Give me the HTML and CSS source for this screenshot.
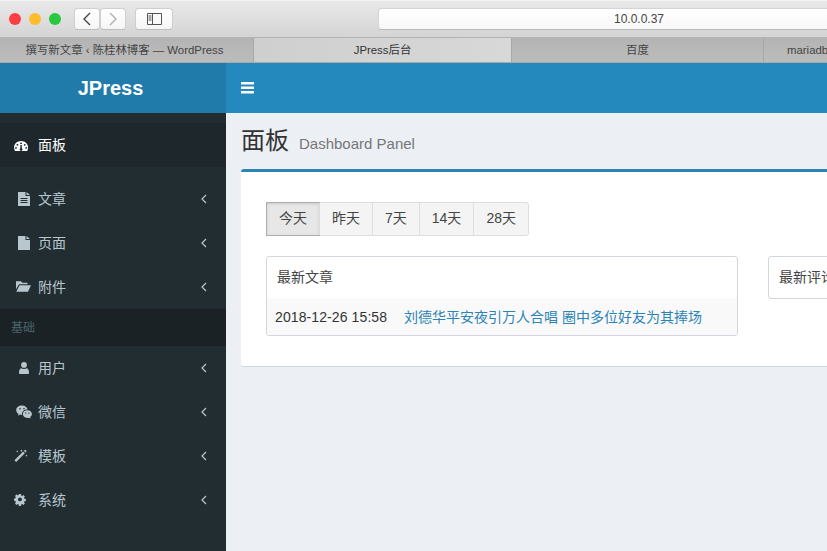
FILE: index.html
```html
<!DOCTYPE html>
<html lang="en">
  <head>
    <meta charset="UTF-8" />
    <meta name="viewport" content="width=device-width, initial-scale=1.0" />
    <title>JPress后台</title>
    <link rel="stylesheet" href="styles.css">
  </head>
  <body>
    <!-- browser chrome -->
    <div class="toolbar">
      <div class="lights">
        <span class="light red"></span>
        <span class="light yellow"></span>
        <span class="light green"></span>
      </div>
      <div class="nav_btns">
        <div class="tool_btn nav_btn">
          <svg width="10" height="14" viewBox="0 0 10 14"><path d="M8 1 2 7l6 6" fill="none" stroke="#444" stroke-width="1.4"/></svg>
        </div>
        <div class="tool_btn nav_btn">
          <svg width="10" height="14" viewBox="0 0 10 14"><path d="m2 1 6 6-6 6" fill="none" stroke="#b0b0b0" stroke-width="1.4"/></svg>
        </div>
      </div>
      <div class="tool_btn side_btn">
        <svg width="15" height="12" viewBox="0 0 15 12"><path d="M.5.5h14v11H.5zM5.500.5v11M1.500 3h3M1.500 5h3M1.500 7h3" fill="none" stroke="#555"/></svg>
      </div>
      <div class="url_bar">10.0.0.37</div>
    </div>
    <div class="tabs">
      <div class="tab tab_first">撰写新文章 ‹ 陈桂林博客 — WordPress</div>
      <div class="tab tab_active">JPress后台</div>
      <div class="tab tab_third">百度</div>
      <div class="tab tab_last">mariadb</div>
    </div>

    <div class="app">
      <!-- sidebar -->
      <div class="sidebar">
        <div class="logo">JPress</div>
        <div class="menu">
          <a class="menu_item active" href="#">
            <svg class="icon" width="18" height="14" viewBox="0 0 18 14"><path transform="translate(-.6 1.700) scale(.96 .9)" fill-rule="evenodd" d="M8 1.500c4.200 0 7.300 3.200 7.300 7.200 0 1.300-.3 2.400-.9 3.500-.1.200-.3.300-.5.300H2.100c-.2 0-.4-.1-.5-.3C1 11.100.7 10 .7 8.700.7 4.700 3.800 1.500 8 1.500ZM8 3a1 1 0 1 0 0 2 1 1 0 0 0 0-2ZM4.200 4.700a1 1 0 1 0 0 2 1 1 0 0 0 0-2ZM11.800 4.700a1 1 0 1 0 0 2 1 1 0 0 0 0-2ZM2.700 8a1 1 0 1 0 0 2 1 1 0 0 0 0-2ZM13.300 8a1 1 0 1 0 0 2 1 1 0 0 0 0-2ZM7.300 6l-.1 3.600a1.500 1.500 0 1 0 1.600 0L8.700 6Z"/></svg>
            <span>面板</span>
          </a>
          <div class="menu_group">
            <a class="menu_item" href="#">
              <svg class="icon" width="18" height="14" viewBox="0 0 18 14"><path transform="translate(2 0)" fill-rule="evenodd" d="M2 0h7.500v4H14v10H2ZM10.500 0 14 3h-3.500ZM4.500 6v1h7V6ZM4.500 8v1h7V8ZM4.500 10v1h7v-1Z"/></svg>
              <span>文章</span>
              <svg class="arrow" width="6" height="10" viewBox="0 0 6 10"><path d="M5 1 1 5l4 4" fill="none" stroke="#b8c7ce" stroke-width="1.200"/></svg>
            </a>
            <a class="menu_item" href="#">
              <svg class="icon" width="18" height="14" viewBox="0 0 18 14"><path transform="translate(2 0)" d="M2 0h7.500v4H14v10H2ZM10.500 0 14 3h-3.500Z"/></svg>
              <span>页面</span>
              <svg class="arrow" width="6" height="10" viewBox="0 0 6 10"><path d="M5 1 1 5l4 4" fill="none" stroke="#b8c7ce" stroke-width="1.200"/></svg>
            </a>
            <a class="menu_item" href="#">
              <svg class="icon" width="18" height="14" viewBox="0 0 18 14"><path transform="translate(1.500 -.3)" d="M.5 1.500h5l1.300 1.500H12v1.500H3.500L.5 9.500ZM4 5.500h11.500L12.500 12H.8Z"/></svg>
              <span>附件</span>
              <svg class="arrow" width="6" height="10" viewBox="0 0 6 10"><path d="M5 1 1 5l4 4" fill="none" stroke="#b8c7ce" stroke-width="1.200"/></svg>
            </a>
          </div>
          <div class="menu_label">基础</div>
          <a class="menu_item" href="#">
            <svg class="icon" width="18" height="14" viewBox="0 0 18 14"><circle cx="10" cy="3.900" r="2.900"/><path d="M6 13c-.6 0-1-.4-1-1 0-2.500.6-4.300 2.400-4.700.7.500 1.600.8 2.600.8s1.900-.3 2.600-.8c1.800.4 2.400 2.200 2.400 4.700 0 .6-.4 1-1 1Z"/></svg>
            <span>用户</span>
            <svg class="arrow" width="6" height="10" viewBox="0 0 6 10"><path d="M5 1 1 5l4 4" fill="none" stroke="#b8c7ce" stroke-width="1.200"/></svg>
          </a>
          <a class="menu_item" href="#">
            <svg class="icon" width="18" height="14" viewBox="0 0 18 14"><g transform="translate(2 0)"><path fill-rule="evenodd" d="M6 .5c3 0 5.300 1.800 5.500 4.100C8.500 4.500 6 6.500 6 9c0 .3 0 .6.100.9-.7 0-1.300-.1-1.900-.3L2 10.700l.5-1.800C1.100 8 .2 6.700.2 5.200.2 2.600 2.800.5 6 .5ZM4 3a.8.8 0 1 0 0 1.600A.8.8 0 0 0 4 3ZM8 3a.8.8 0 1 0 0 1.600A.8.8 0 0 0 8 3Z"/><path fill-rule="evenodd" d="M11.300 5.300c2.500 0 4.600 1.700 4.600 3.800 0 1.200-.7 2.200-1.700 3l.4 1.500-1.700-.9c-.5.100-1 .2-1.600.2-2.500 0-4.500-1.700-4.500-3.800s2-3.800 4.500-3.800ZM9.700 7.400a.7.7 0 1 0 0 1.400.7.7 0 0 0 0-1.400ZM12.900 7.400a.7.7 0 1 0 0 1.400.7.7 0 0 0 0-1.400Z"/></g></svg>
            <span>微信</span>
            <svg class="arrow" width="6" height="10" viewBox="0 0 6 10"><path d="M5 1 1 5l4 4" fill="none" stroke="#b8c7ce" stroke-width="1.200"/></svg>
          </a>
          <a class="menu_item" href="#">
            <svg class="icon" width="18" height="14" viewBox="0 0 18 14"><path transform="scale(.92)" d="M.5 12.200 10 2.700l1.800 1.800-9.500 9.500ZM10.700 2l1.600-1.200 1.400 1.400-1.200 1.600ZM8 .5l.5 1 1 .4-1 .5-.5 1-.5-1-1-.5 1-.4ZM3.500 1.500l.4.800.8.400-.8.400-.4.800-.4-.8-.8-.4.800-.4ZM13.500 6l.4.800.8.400-.8.400-.4.800-.4-.8-.8-.4.800-.4Z"/></svg>
            <span>模板</span>
            <svg class="arrow" width="6" height="10" viewBox="0 0 6 10"><path d="M5 1 1 5l4 4" fill="none" stroke="#b8c7ce" stroke-width="1.200"/></svg>
          </a>
          <a class="menu_item" href="#">
            <svg class="icon" width="18" height="14" viewBox="0 0 18 14"><path transform="translate(-.85 .2) scale(.85)" fill-rule="evenodd" d="M6.800 1h2.400l.3 1.700 1.100.5 1.500-1 1.700 1.700-1 1.500.5 1.100 1.700.3v2.400l-1.700.3-.5 1.100 1 1.500-1.700 1.700-1.500-1-1.100.5-.3 1.700H6.800l-.3-1.700-1.100-.5-1.500 1-1.700-1.700 1-1.500-.5-1.100L1 8.500V6.100l1.700-.3.5-1.100-1-1.500 1.700-1.700 1.500 1 1.100-.5ZM8 5a2.300 2.300 0 1 0 0 4.600A2.300 2.300 0 0 0 8 5Z"/></svg>
            <span>系统</span>
            <svg class="arrow" width="6" height="10" viewBox="0 0 6 10"><path d="M5 1 1 5l4 4" fill="none" stroke="#b8c7ce" stroke-width="1.200"/></svg>
          </a>
        </div>
      </div>

      <!-- main -->
      <div class="main">
        <div class="topbar">
          <svg width="13" height="12" viewBox="0 0 13 12"><path d="M0 0h13v2.500H0zM0 4.500h13V7H0zM0 9h13v2.500H0z" fill="#fff"/></svg>
        </div>
        <div class="page_title">
          <h1>面板</h1>
          <small>Dashboard Panel</small>
        </div>
        <div class="box">
          <div class="btn_group">
            <div class="btn btn_on">今天</div>
            <div class="btn">昨天</div>
            <div class="btn">7天</div>
            <div class="btn">14天</div>
            <div class="btn">28天</div>
          </div>
          <div class="panels">
            <div class="panel">
              <div class="panel_head">最新文章</div>
              <div class="panel_row">
                <span class="row_date">2018-12-26 15:58</span>
                <a class="row_link" href="#">刘德华平安夜引万人合唱 圈中多位好友为其捧场</a>
              </div>
            </div>
            <div class="panel">
              <div class="panel_head">最新评论</div>
            </div>
          </div>
        </div>
      </div>
    </div>
  </body>
</html>
```

FILE: styles.css
```css
body {
  margin: 0;
  height: 551px;
  overflow: hidden;
  display: flex;
  flex-direction: column;
  font-family: "Liberation Sans", "Noto Sans CJK SC", sans-serif;
  font-size: 14px;
  background-color: #ecf0f5;
}
a {
  text-decoration: none;
}

/* browser chrome */
.toolbar {
  height: 38px;
  flex: none;
  display: flex;
  align-items: flex-start;
  padding: 7px 0 0 9px;
  box-sizing: border-box;
  overflow: hidden;
  background: linear-gradient(#e9e9e9, #d4d4d4);
  border-top: 1px solid #f3f3f3;
  border-bottom: 1px solid #b4b4b4;
}
.lights {
  display: flex;
  gap: 8px;
  margin-top: 5px;
}
.light {
  width: 12px;
  height: 12px;
  border-radius: 50%;
}
.red {
  background-color: #fc3d44;
}
.yellow {
  background-color: #fdbd28;
}
.green {
  background-color: #28c93f;
}
.tool_btn {
  height: 22px;
  box-sizing: border-box;
  display: flex;
  align-items: center;
  justify-content: center;
  background: linear-gradient(#fff, #f5f5f5);
  border: 1px solid #cfcfcf;
  border-bottom-color: #bdbdbd;
  border-radius: 4px;
}
.nav_btns {
  display: flex;
  margin-left: 13px;
}
.nav_btn {
  width: 26px;
}
.side_btn {
  width: 38px;
  margin-left: 9px;
}
.url_bar {
  flex: 1;
  height: 22px;
  line-height: 20px;
  margin-left: 205px;
  margin-right: -73px;
  text-align: center;
  font-size: 12px;
  color: #444;
  background: linear-gradient(#fff, #f8f8f8);
  border: 1px solid #d4d4d4;
  border-bottom-color: #b8b8b8;
  border-radius: 4px;
  box-sizing: border-box;
}
.tabs {
  height: 25px;
  flex: none;
  display: flex;
  box-sizing: border-box;
  border-bottom: 1px solid #a9a9a9;
  background-color: #b9b9b9;
}
.tab {
  box-sizing: border-box;
  line-height: 24px;
  text-align: center;
  font-size: 11.4px;
  color: #444;
  white-space: nowrap;
  border-right: 1px solid #a8a8a8;
  background: linear-gradient(#b4b4b4, #bcbcbc);
}
.tab_first {
  width: 254px;
  padding-right: 4px;
}
.tab_active {
  width: 258px;
  color: #333;
  background: linear-gradient(to right, #cfcfcf, #d8d8d8);
}
.tab_third {
  width: 252px;
}
.tab_last {
  flex: 1;
  min-width: 0;
  overflow: hidden;
  border-right: 0;
  padding-left: 23px;
  text-align: left;
}

/* sidebar */
.app {
  flex: 1;
  display: flex;
  min-height: 0;
}
.sidebar {
  width: 226px;
  flex: none;
  background-color: #222d32;
}
.logo {
  height: 50px;
  line-height: 50px;
  padding-right: 5px;
  box-sizing: border-box;
  text-align: center;
  font-size: 20px;
  font-weight: bold;
  color: #fff;
  background-color: #207bab;
}
.menu {
  padding-top: 10px;
}
.menu_item {
  height: 44px;
  display: flex;
  align-items: center;
  padding: 0 19px 0 14px;
  color: #b8c7ce;
  fill: #b8c7ce;
}
.menu_item.active {
  color: #fff;
  fill: #fff;
  background-color: #1e282c;
}
.menu_item span {
  flex: 1;
  margin-left: 6px;
  padding-bottom: 2px;
}
.menu_group {
  margin-top: 10px;
}
.menu_label {
  height: 37px;
  line-height: 38px;
  padding-left: 11px;
  font-size: 12px;
  color: #4b646f;
  background-color: #1a2226;
}

/* main */
.main {
  flex: 1;
  min-width: 0;
  overflow: hidden;
}
.topbar {
  height: 50px;
  display: flex;
  align-items: center;
  padding-left: 15px;
  box-sizing: border-box;
  background-color: #2489bd;
}
.page_title {
  display: flex;
  align-items: baseline;
  height: 56px;
  padding: 10px 0 0 15px;
  box-sizing: border-box;
}
.page_title h1 {
  margin: 0;
  font-size: 24px;
  font-weight: normal;
  line-height: 36px;
  color: #333;
}
.page_title small {
  margin-left: 10px;
  font-size: 15px;
  color: #777;
}
.box {
  width: 900px;
  margin-left: 15px;
  padding: 30px 25px;
  box-sizing: border-box;
  background-color: #fff;
  border-top: 3px solid #2c84b5;
  border-bottom: 1px solid #d2d6de;
  border-radius: 3px;
}
.btn_group {
  display: inline-flex;
  border: 1px solid #ddd;
  border-radius: 3px;
  background-color: #f4f4f4;
  vertical-align: top;
}
.btn {
  height: 32px;
  line-height: 31px;
  padding: 0 12px;
  color: #444;
  border-left: 1px solid #ddd;
}
.btn:first-child {
  border-left: 0;
}
.btn_on {
  background-color: #e7e7e7;
  box-shadow: inset 0 1px 3px rgba(0, 0, 0, 0.125);
  outline: 1px solid #adadad;
}
.panels {
  display: flex;
  align-items: flex-start;
  gap: 30px;
  margin-top: 20px;
}
.panel {
  width: 472px;
  box-sizing: border-box;
  flex: none;
  border: 1px solid #d2d6de;
  border-radius: 3px;
  overflow: hidden;
}
.panel_head {
  height: 41px;
  line-height: 40px;
  padding-left: 10px;
  font-size: 14px;
  color: #444;
}
.panel_row {
  height: 37px;
  line-height: 38px;
  padding-left: 8px;
  font-size: 14px;
  color: #333;
  background-color: #f9f9f9;
}
.row_date {
  letter-spacing: 0.1px;
}
.row_link {
  margin-left: 13px;
  font-size: 14px;
  color: #2c84b5;
}
```
